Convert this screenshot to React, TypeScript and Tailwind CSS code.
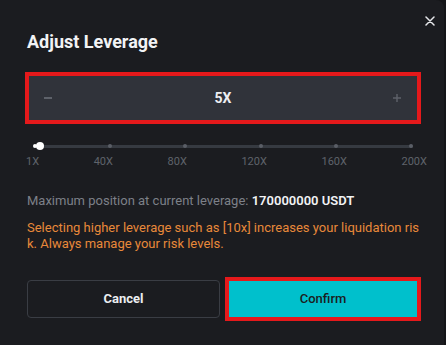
import React, { useState } from 'react'

const marks = ['1X', '40X', '80X', '120X', '160X', '200X']

export default function App() {
  const [leverage, setLeverage] = useState(5)

  return (
    <div className="w-[446px] h-[345px] bg-[#141518] overflow-hidden" style={{ fontFamily: 'Roboto, "Liberation Sans", sans-serif' }}>
      <div className="relative w-[444px] h-full bg-[#1b1c20] rounded-tr-lg pl-[26px] pr-[23px] pt-[31px]">
        <button className="absolute right-[9px] top-[16px] w-[10px] h-[10px] text-[#e6e7ea]" aria-label="Close">
          <svg viewBox="0 0 10 10" className="w-full h-full" fill="none" stroke="currentColor" strokeWidth="1.5" strokeLinecap="round">
            <path d="M1 1l8 8M9 1l-8 8" />
          </svg>
        </button>

        <h2 className="pl-[1px] text-[18px] leading-[22px] font-bold text-[#f2f3f5]">Adjust Leverage</h2>

        <div className="mt-[19px] -ml-[1px] border-4 border-[#e5191b]">
          <div className="h-[44px] bg-[#30333a] flex items-center justify-between px-[15px]">
            <button onClick={() => setLeverage(Math.max(1, leverage - 1))} className="w-[10px] h-[10px] flex items-center">
              <span className="block w-[8px] h-[1.5px] bg-[#5e626a]" />
            </button>
            <span className="text-[14px] font-bold text-[#eceef1]">{leverage}X</span>
            <button onClick={() => setLeverage(Math.min(200, leverage + 1))} className="w-[10px] h-[10px] text-[#5e626a]">
              <svg viewBox="0 0 10 10" className="w-full h-full" stroke="currentColor" strokeWidth="1.4">
                <path d="M5 1v8M1 5h8" />
              </svg>
            </button>
          </div>
        </div>

        <div className="mt-[18px] pl-[7px] pr-[8px]">
          <div className="relative h-[8px] flex items-center">
            <div className="w-full h-[3px] rounded-full bg-[#363a41]" />
            <div className="absolute inset-0 flex items-center justify-between">
              {marks.map((m, i) => (
                <span key={m} className={i === 0 ? 'w-[4px] h-[4px] rounded-full bg-white' : 'w-[4px] h-[4px] rounded-full bg-[#5a5e66]'} />
              ))}
            </div>
            <span className="absolute left-[3px] top-0 w-[8px] h-[8px] rounded-full bg-white" />
          </div>
        </div>
        <div className="mt-[5px] -mr-[6px] flex justify-between text-[11px] leading-[14px] text-[#5f636b]">
          {marks.map((m) => (
            <span key={m}>{m}</span>
          ))}
        </div>

        <p className="mt-[24px] pl-[1px] text-[13px] leading-[16px] text-[#7d8088]">
          Maximum position at current leverage: <span className="font-semibold text-[#f2f3f5]">170000000 USDT</span>
        </p>

        <p className="mt-[11px] pl-[1px] pr-[2px] text-[13px] leading-[16px] text-[#e8893a] break-all">
          Selecting higher leverage such as [10x] increases your liquidation risk. Always manage your risk levels.
        </p>

        <div className="mt-[25px] flex gap-[5px] items-center">
          <button className="ml-[1px] w-[193px] h-[38px] rounded-[4px] border border-[#3a3d44] text-[13px] font-bold text-[#eceef1]">
            Cancel
          </button>
          <div className="border-4 border-[#e5191b]">
            <button className="w-[188px] h-[36px] bg-[#00c0cc] text-[13px] font-medium text-[#1b1c20]">
              Confirm
            </button>
          </div>
        </div>
      </div>
    </div>
  )
}
